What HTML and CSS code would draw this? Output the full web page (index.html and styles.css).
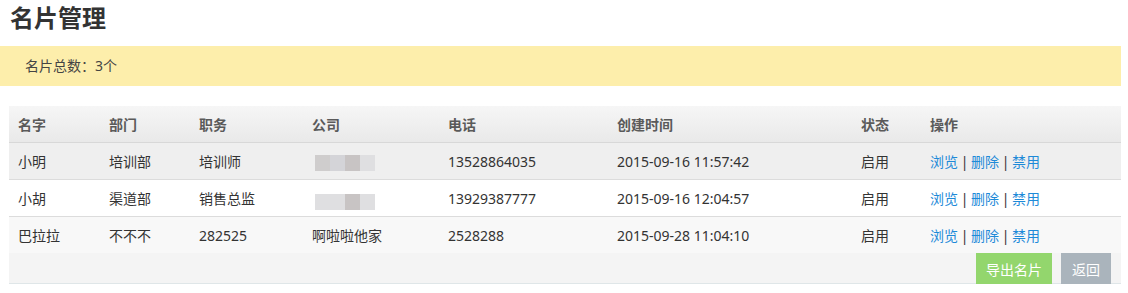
FILE: index.html
```html
<!DOCTYPE html>
<html lang="zh-CN">
<head>
  <meta charset="UTF-8" />
  <title>名片管理</title>
  <link rel="stylesheet" href="styles.css">
</head>
<body>
  <h1 class="title">名片管理</h1>
  <div class="summary">名片总数：3个</div>

  <div class="table-wrap">
    <table class="card-table">
      <thead>
        <tr>
          <th class="c-name">名字</th>
          <th class="c-dept">部门</th>
          <th class="c-job">职务</th>
          <th class="c-company">公司</th>
          <th class="c-phone">电话</th>
          <th class="c-time">创建时间</th>
          <th class="c-state">状态</th>
          <th class="c-ops">操作</th>
        </tr>
      </thead>
      <tbody>
        <tr class="row-odd">
          <td>小明</td>
          <td>培训部</td>
          <td>培训师</td>
          <td><span class="blur"><i class="b1"></i><i class="b2"></i><i class="b3"></i><i class="b4"></i></span></td>
          <td>13528864035</td>
          <td>2015-09-16 11:57:42</td>
          <td>启用</td>
          <td class="ops"><a href="#">浏览</a> | <a href="#">删除</a> | <a href="#">禁用</a></td>
        </tr>
        <tr class="row-even">
          <td>小胡</td>
          <td>渠道部</td>
          <td>销售总监</td>
          <td><span class="blur blur-low"><i class="b4"></i><i class="b4"></i><i class="b3"></i><i class="b4"></i></span></td>
          <td>13929387777</td>
          <td>2015-09-16 12:04:57</td>
          <td>启用</td>
          <td class="ops"><a href="#">浏览</a> | <a href="#">删除</a> | <a href="#">禁用</a></td>
        </tr>
        <tr class="row-last">
          <td>巴拉拉</td>
          <td class="brown">不不不</td>
          <td>282525</td>
          <td>啊啦啦他家</td>
          <td>2528288</td>
          <td>2015-09-28 11:04:10</td>
          <td>启用</td>
          <td class="ops"><a href="#">浏览</a> | <a href="#">删除</a> | <a href="#">禁用</a></td>
        </tr>
      </tbody>
    </table>
    <div class="table-foot">
      <button class="btn btn-export">导出名片</button>
      <button class="btn btn-back">返回</button>
    </div>
  </div>
</body>
</html>
```

FILE: styles.css
```css
body {
  margin: 0;
  width: 1121px;
  font-family: "Noto Sans", "Noto Sans CJK SC", sans-serif;
  font-size: 14px;
  color: #333;
  background: #fff;
}

.title {
  margin: 0;
  padding: 2px 0 0 10px;
  height: 44px;
  font-size: 24px;
  line-height: 32px;
  font-weight: bold;
  color: #333;
}

.summary {
  height: 40px;
  line-height: 40px;
  padding-left: 25px;
  background: #fdeeab;
  color: #444;
}

.table-wrap {
  margin: 20px 0 0 9px;
}

.card-table {
  width: 100%;
  border-collapse: collapse;
  table-layout: fixed;
}

.card-table th,
.card-table td {
  text-align: left;
  padding: 0 0 0 9px;
  white-space: nowrap;
}

.card-table th {
  height: 36px;
  font-weight: bold;
  color: #5a5a5a;
  background: linear-gradient(#f6f6f6, #e9e9e9);
  border-bottom: 1px solid #d8d8d8;
}

.card-table td {
  height: 36px;
  color: #333;
  border-bottom: 1px solid #dcdcdc;
}

.row-odd td { background: #efefef; }
.row-even td { background: #fff; }
.row-last td { background: #f8f8f8; border-bottom: none; }

.c-name { width: 82px; }
.c-dept { width: 81px; }
.c-job { width: 104px; }
.c-company { width: 127px; }
.c-phone { width: 160px; }
.c-time { width: 235px; }
.c-state { width: 60px; }

.brown { color: #4a3a2a; }

.ops {
  color: #0d6dbf;
  word-spacing: -1px;
}
.ops a {
  color: #1e8ad8;
  text-decoration: none;
}

.blur {
  display: inline-flex;
  vertical-align: middle;
  margin-left: 3px;
  filter: blur(0.6px);
}
.blur i {
  display: block;
  width: 15px;
  height: 16px;
}
.blur-low { margin-top: 8px; }
.b1 { background: #cfcdcd; }
.b2 { background: #d4d4d8; }
.b3 { background: #c8c4c4; }
.b4 { background: #dfdfe1; }

.table-foot {
  display: flex;
  justify-content: flex-end;
  gap: 9px;
  height: 30px;
  padding-right: 10px;
  background: #f4f4f4;
  border-bottom: 1px solid #dfe6e8;
}

.btn {
  height: 32px;
  border: none;
  padding: 0;
  font-family: inherit;
  font-size: 14px;
  color: #fff;
  cursor: pointer;
}

.btn-export {
  width: 76px;
  background: #93d66d;
}

.btn-back {
  width: 50px;
  background: #aab4bc;
}
```
